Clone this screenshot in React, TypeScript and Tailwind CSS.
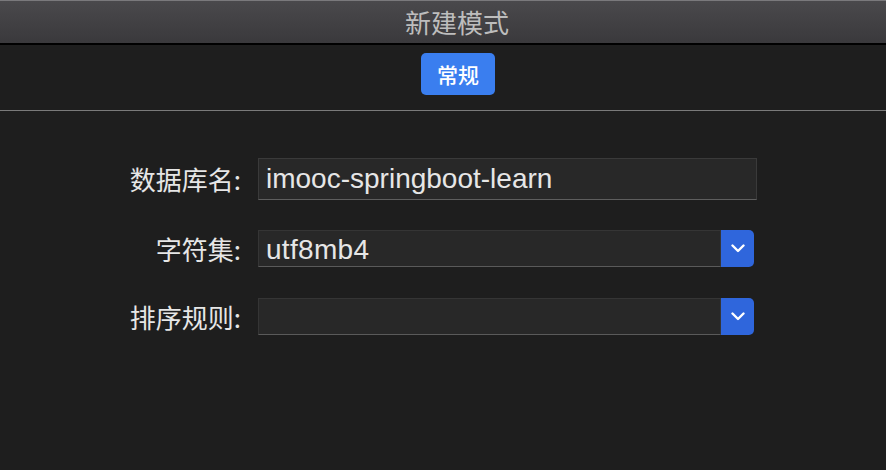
import React from "react";

const cjk = { fontFamily: '"Noto Sans CJK SC", "Noto Sans", sans-serif' };
const latin = { fontFamily: '"Liberation Sans", "Noto Sans CJK SC", sans-serif' };

function Chevron() {
  return (
    <svg width="14" height="9" viewBox="0 0 14 9" fill="none">
      <path d="M1.5 1.5 L7 7 L12.5 1.5" stroke="white" strokeWidth="2.4" strokeLinecap="round" strokeLinejoin="round" />
    </svg>
  );
}

function Select({ value }: { value?: string }) {
  return (
    <div className="flex h-[37px] w-[496px]">
      <div className="flex flex-1 items-center border border-[#353535] border-b-[#5a5a5a] bg-[#282828] pl-[7px] pt-[2px] text-[28px] leading-none tracking-[0.3px] text-[#e6e6e6]" style={latin}>
        {value}
      </div>
      <div className="flex w-[33px] items-center justify-center rounded-r-[5px] bg-[#2f66dc]">
        <Chevron />
      </div>
    </div>
  );
}

export default function App() {
  return (
    <div className="flex h-[470px] w-[886px] flex-col overflow-hidden bg-[#1e1e1e]">
      <div className="flex h-[43px] items-center justify-center border-t border-[#7a797c] bg-gradient-to-b from-[#4a494c] to-[#3a393c] pl-[28px]">
        <span className="text-[26px] leading-none text-[#bdbdbd]" style={cjk}>新建模式</span>
      </div>
      <div className="h-[2px] bg-black" />
      <div className="flex h-[65px] items-start justify-center pl-[30px] pt-[8px]">
        <div className="flex h-[42px] w-[74px] items-center justify-center rounded-[5px] bg-[#3a7eef] text-[21px] font-medium leading-none text-white" style={cjk}>
          常规
        </div>
      </div>
      <div className="h-px bg-[#7a7a7a]" />
      <div className="flex flex-col pt-[47px]">
        <div className="flex h-[42px] items-center">
          <div className="w-[241px] text-right text-[26px] leading-none text-[#e6e6e6]" style={cjk}>数据库名:</div>
          <div className="ml-[17px] flex h-[42px] w-[499px] items-center border border-[#3a3a3a] border-b-[#5e5e5e] bg-[#282828] pl-[7px] text-[28px] leading-none text-[#e6e6e6]" style={latin}>
            imooc-springboot-learn
          </div>
        </div>
        <div className="mt-[30px] flex h-[37px] items-center">
          <div className="w-[241px] text-right text-[26px] leading-none text-[#e6e6e6]" style={cjk}>字符集:</div>
          <div className="ml-[17px]">
            <Select value="utf8mb4" />
          </div>
        </div>
        <div className="mt-[31px] flex h-[37px] items-center">
          <div className="w-[241px] text-right text-[26px] leading-none text-[#e6e6e6]" style={cjk}>排序规则:</div>
          <div className="ml-[17px]">
            <Select />
          </div>
        </div>
      </div>
    </div>
  );
}
